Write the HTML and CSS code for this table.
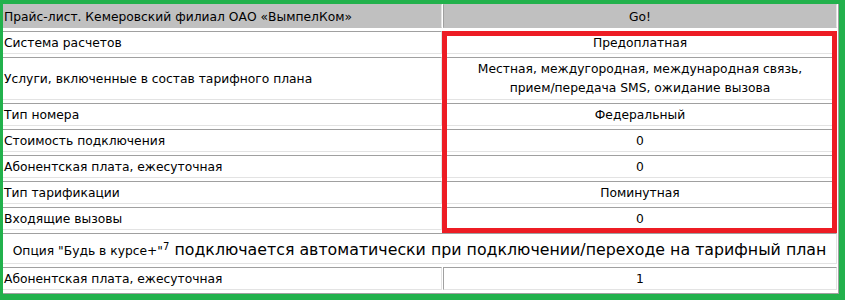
FILE: index.html
```html
<!DOCTYPE html>
<html lang="ru">
<head>
<meta charset="utf-8">
<title>Прайс-лист</title>
<link rel="stylesheet" href="styles.css">
</head>
<body>
<div class="page">
  <table class="price">
    <tr>
      <th class="c1">Прайс-лист. Кемеровский филиал ОАО «ВымпелКом»</th>
      <th class="c2">Go!</th>
    </tr>
    <tr><td>Система расчетов</td><td class="v">Предоплатная</td></tr>
    <tr><td>Услуги, включенные в состав тарифного плана</td><td class="v multi">Местная, междугородная, международная связь,<br>прием/передача SMS, ожидание вызова</td></tr>
    <tr><td>Тип номера</td><td class="v">Федеральный</td></tr>
    <tr><td>Стоимость подключения</td><td class="v">0</td></tr>
    <tr><td>Абонентская плата, ежесуточная</td><td class="v">0</td></tr>
    <tr><td>Тип тарификации</td><td class="v">Поминутная</td></tr>
    <tr><td>Входящие вызовы</td><td class="v">0</td></tr>
    <tr><td colspan="2" class="opt"><span class="opt-small">Опция "Будь в курсе+"<sup>7</sup></span> подключается автоматически при подключении/переходе на тарифный план</td></tr>
    <tr><td>Абонентская плата, ежесуточная</td><td class="v">1</td></tr>
  </table>
  <div class="mark-red"></div>
  <div class="frame-green"></div>
</div>
</body>
</html>
```

FILE: styles.css
```css
html, body {
  margin: 0;
  padding: 0;
  background: #ffffff;
}

.page {
  position: relative;
  width: 845px;
  height: 300px;
  overflow: hidden;
  font-family: "DejaVu Sans", Verdana, sans-serif;
  font-size: 12.3px;
  color: #000000;
}

.price {
  box-sizing: border-box;
  width: 839px;
  table-layout: fixed;
  border-collapse: separate;
  border-spacing: 1px 3px;
  border: 1px solid;
  border-color: #e3e3e3 #a0a0a0 #a0a0a0 #e3e3e3;
}

.price th,
.price td {
  box-sizing: border-box;
  border: 1px solid;
  border-color: #a0a0a0 #e3e3e3 #e3e3e3 #a0a0a0;
  font-weight: normal;
  vertical-align: middle;
}

.price th {
  background: #c0c0c0;
  border-color: #c0c0c0 #e3e3e3 #c0c0c0 #a0a0a0;
  padding: 3px 1px 0;
  line-height: 19px;
  text-align: left;
}

.price th.c1 {
  width: 440px;
}

.price th.c2 {
  text-align: center;
}

.price td {
  padding: 2px 1px 0;
  line-height: 19px;
  text-align: left;
}

.price td.v {
  text-align: center;
}

.price td.multi {
  padding-bottom: 1px;
}

.price td.opt {
  height: 30px;
  text-align: center;
  font-size: 15.8px;
  line-height: 20px;
  padding: 6px 1px 2px;
}

.opt-small {
  font-size: 12.3px;
}

.opt-small sup {
  font-size: 10px;
  line-height: 0;
}

.mark-red {
  position: absolute;
  left: 442px;
  top: 31px;
  width: 395px;
  height: 202px;
  box-sizing: border-box;
  border: 5px solid #ed1c24;
}

.frame-green {
  position: absolute;
  left: 0;
  top: 0;
  width: 845px;
  height: 300px;
  box-sizing: border-box;
  border-style: solid;
  border-color: #22b14c;
  border-width: 4px 6px 6px 3px;
}
```
